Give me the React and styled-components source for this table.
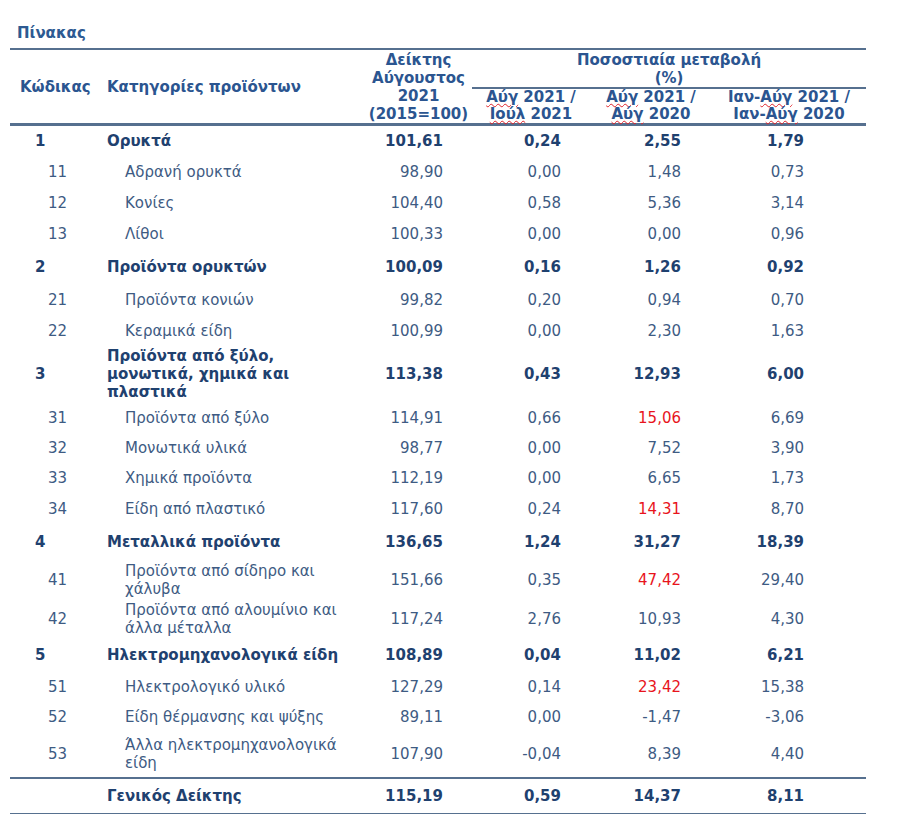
import React from 'react'
import styled, { createGlobalStyle, css } from 'styled-components'

const GlobalStyle = createGlobalStyle`
  body {
    margin: 0;
    background: #fff;
    font-family: "DejaVu Sans", Verdana, sans-serif;
  }
`

const rows = [
  { code: '1', name: 'Ορυκτά', idx: '101,61', m: '0,24', y: '2,55', c: '1,79', main: true, h: 32 },
  { code: '11', name: 'Αδρανή ορυκτά', idx: '98,90', m: '0,00', y: '1,48', c: '0,73', h: 31 },
  { code: '12', name: 'Κονίες', idx: '104,40', m: '0,58', y: '5,36', c: '3,14', h: 30 },
  { code: '13', name: 'Λίθοι', idx: '100,33', m: '0,00', y: '0,00', c: '0,96', h: 32 },
  { code: '2', name: 'Προϊόντα ορυκτών', idx: '100,09', m: '0,16', y: '1,26', c: '0,92', main: true, h: 34 },
  { code: '21', name: 'Προϊόντα κονιών', idx: '99,82', m: '0,20', y: '0,94', c: '0,70', h: 32 },
  { code: '22', name: 'Κεραμικά είδη', idx: '100,99', m: '0,00', y: '2,30', c: '1,63', h: 30 },
  { code: '3', name: 'Προϊόντα από ξύλο, μονωτικά, χημικά και πλαστικά', idx: '113,38', m: '0,43', y: '12,93', c: '6,00', main: true, h: 57 },
  { code: '31', name: 'Προϊόντα από ξύλο', idx: '114,91', m: '0,66', y: '15,06', c: '6,69', red: true, h: 30 },
  { code: '32', name: 'Μονωτικά υλικά', idx: '98,77', m: '0,00', y: '7,52', c: '3,90', h: 30 },
  { code: '33', name: 'Χημικά προϊόντα', idx: '112,19', m: '0,00', y: '6,65', c: '1,73', h: 31 },
  { code: '34', name: 'Είδη από πλαστικό', idx: '117,60', m: '0,24', y: '14,31', c: '8,70', red: true, h: 30 },
  { code: '4', name: 'Μεταλλικά προϊόντα', idx: '136,65', m: '1,24', y: '31,27', c: '18,39', main: true, h: 36 },
  { code: '41', name: 'Προϊόντα από σίδηρο και χάλυβα', idx: '151,66', m: '0,35', y: '47,42', c: '29,40', red: true, h: 40 },
  { code: '42', name: 'Προϊόντα από αλουμίνιο και άλλα μέταλλα', idx: '117,24', m: '2,76', y: '10,93', c: '4,30', h: 38 },
  { code: '5', name: 'Ηλεκτρομηχανολογικά είδη', idx: '108,89', m: '0,04', y: '11,02', c: '6,21', main: true, h: 34 },
  { code: '51', name: 'Ηλεκτρολογικό υλικό', idx: '127,29', m: '0,14', y: '23,42', c: '15,38', red: true, h: 30 },
  { code: '52', name: 'Είδη θέρμανσης και ψύξης', idx: '89,11', m: '0,00', y: '-1,47', c: '-3,06', h: 30 },
  { code: '53', name: 'Άλλα ηλεκτρομηχανολογικά είδη', idx: '107,90', m: '-0,04', y: '8,39', c: '4,40', h: 46 },
]

const Page = styled.div`
  padding: 24px 0 0 10px;
  width: 856px;
`

const Title = styled.div`
  font-size: 15px;
  font-weight: bold;
  color: #2d5a92;
  padding-left: 7px;
  line-height: 18px;
  margin-bottom: 6px;
`

const Table = styled.table`
  width: 856px;
  border-collapse: collapse;
  table-layout: fixed;
  font-size: 15px;
  line-height: 18px;
  border-top: 2px solid #56708f;
  border-bottom: 2px solid #56708f;
`

const Head = styled.thead`
  border-bottom: 3px solid #56708f;
`

const Th = styled.th`
  color: #2b5590;
  font-weight: bold;
  vertical-align: middle;
  text-align: ${p => p.$align || 'center'};
  line-height: ${p => p.$lh || 18}px;
  padding: 0 0 0 ${p => p.$pl || 0}px;
  height: ${p => p.$h || 0}px;
  white-space: nowrap;
  ${p => p.$rule && css`border-bottom: 2px solid #56708f;`}
`

const Squiggle = styled.span`
  text-decoration: underline wavy #e0242a;
  text-decoration-thickness: 1px;
  text-underline-offset: 1px;
`

const Row = styled.tr`
  height: ${p => p.$h}px;
  ${p => p.$total && css`border-top: 2px solid #56708f;`}
`

const Td = styled.td`
  vertical-align: middle;
  padding: 0 ${p => p.$pr || 0}px 0 ${p => p.$pl || 0}px;
  text-align: ${p => p.$align || 'left'};
  font-weight: ${p => (p.$bold ? 'bold' : 'normal')};
  color: ${p => (p.$red ? '#e8141c' : p.$bold ? '#1f416f' : '#3e5b83')};
`

const Name = styled.div`
  width: ${p => (p.$main ? 258 : 228)}px;
`

const App = () => (
  <Page>
    <GlobalStyle />
    <Title>Πίνακας</Title>
    <Table>
      <colgroup>
        <col style={{ width: 94 }} />
        <col style={{ width: 261 }} />
        <col style={{ width: 107 }} />
        <col style={{ width: 118 }} />
        <col style={{ width: 122 }} />
        <col style={{ width: 154 }} />
      </colgroup>
      <Head>
        <tr>
          <Th rowSpan={2} $align="left" $pl={10}>Κώδικας</Th>
          <Th rowSpan={2} $align="left" $pl={3}>Κατηγορίες προϊόντων</Th>
          <Th rowSpan={2}>
            Δείκτης<br />Αύγουστος<br />2021<br />(2015=100)
          </Th>
          <Th colSpan={3} $rule $h={37}>
            Ποσοστιαία μεταβολή<br />(%)
          </Th>
        </tr>
        <tr>
          <Th $h={34} $lh={17}>
            <Squiggle>Αύγ</Squiggle> 2021 /<br /><Squiggle>Ιούλ</Squiggle> 2021
          </Th>
          <Th $lh={17}>
            <Squiggle>Αύγ</Squiggle> 2021 /<br /><Squiggle>Αύγ</Squiggle> 2020
          </Th>
          <Th $lh={17}>
            Ιαν-<Squiggle>Αύγ</Squiggle> 2021 /<br />Ιαν-<Squiggle>Αύγ</Squiggle> 2020
          </Th>
        </tr>
      </Head>
      <tbody>
        {rows.map(r => (
          <Row key={r.code} $h={r.h}>
            <Td $bold={r.main} $pl={r.main ? 25 : 38}>{r.code}</Td>
            <Td $bold={r.main} $pl={r.main ? 3 : 21}>
              <Name $main={r.main}>{r.name}</Name>
            </Td>
            <Td $bold={r.main} $align="right" $pr={29}>{r.idx}</Td>
            <Td $bold={r.main} $align="right" $pr={29}>{r.m}</Td>
            <Td $bold={r.main} $red={r.red} $align="right" $pr={31}>{r.y}</Td>
            <Td $bold={r.main} $align="right" $pr={62}>{r.c}</Td>
          </Row>
        ))}
        <Row $h={36} $total>
          <Td />
          <Td $bold $pl={3}>Γενικός Δείκτης</Td>
          <Td $bold $align="right" $pr={29}>115,19</Td>
          <Td $bold $align="right" $pr={29}>0,59</Td>
          <Td $bold $align="right" $pr={31}>14,37</Td>
          <Td $bold $align="right" $pr={62}>8,11</Td>
        </Row>
      </tbody>
    </Table>
  </Page>
)

export default App
